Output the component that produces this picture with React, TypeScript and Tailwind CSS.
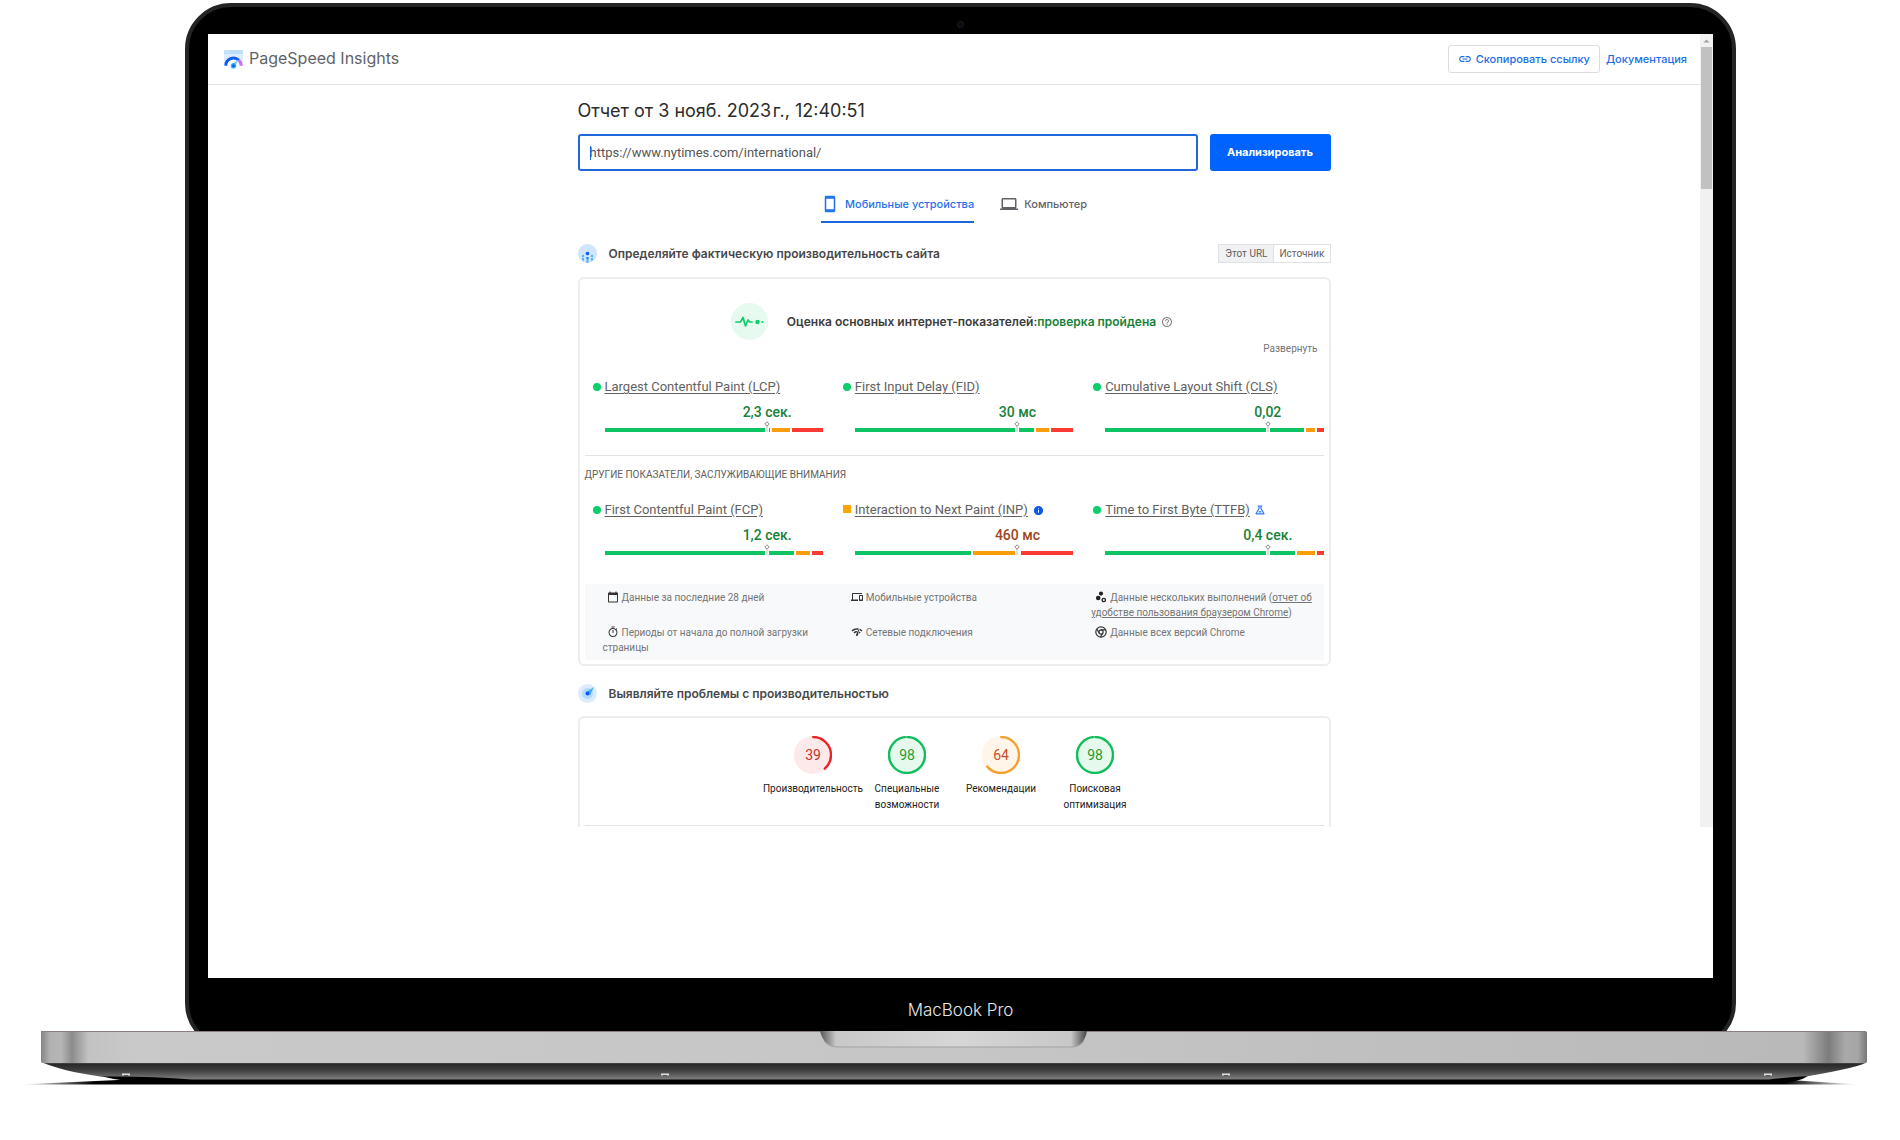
import React from "react";
import {
  MdLink,
  MdStayCurrentPortrait,
  MdLaptop,
  MdHelpOutline,
  MdCalendarToday,
  MdDevices,
  MdOutlineTimer,
  MdNetworkCheck,
  MdInfo,
} from "react-icons/md";

const GREEN = "#0cce6b";
const DISPLAY = "font-['Inter',sans-serif]";

type Metric = {
  name: string;
  value: string;
  segments: [number, number, number];
  average?: boolean;
  badge?: React.ReactNode;
};

function FlaskIcon() {
  return (
    <svg viewBox="0 0 10 10" className="size-[10px]" fill="none" stroke="#2f7bf2" strokeWidth="1.2">
      <path d="M2.600 1h4.800M4 1v2.500L1 8.800h8L6 3.500V1M3.600 6.800h2.800" strokeLinejoin="round" />
    </svg>
  );
}

const coreMetrics: Metric[] = [
  { name: "Largest Contentful Paint (LCP)", value: "2,3 сек.", segments: [165, 18, 31] },
  { name: "First Input Delay (FID)", value: "30 мс", segments: [179, 13, 22] },
  { name: "Cumulative Layout Shift (CLS)", value: "0,02", segments: [199, 9, 6] },
];

const otherMetrics: Metric[] = [
  { name: "First Contentful Paint (FCP)", value: "1,2 сек.", segments: [189, 14, 11] },
  {
    name: "Interaction to Next Paint (INP)",
    value: "460 мс",
    segments: [116, 46, 52],
    average: true,
    badge: <MdInfo className="size-[11px] text-[#0b57f0]" />,
  },
  { name: "Time to First Byte (TTFB)", value: "0,4 сек.", segments: [190, 18, 6], badge: <FlaskIcon /> },
];

function MetricItem({ m }: { m: Metric }) {
  return (
    <div className="flex">
      <span
        className={
          m.average
            ? "mt-[5px] mr-1 size-2 shrink-0 bg-[#ffa400]"
            : "mt-[6px] mr-1 size-2 shrink-0 rounded-full bg-[#0cce6b]"
        }
      />
      <div className="min-w-0 flex-1">
        <div className="flex h-5 items-center gap-[5px] whitespace-nowrap text-[13px] leading-5 text-[#616161]">
          <a href="#metric" className="underline underline-offset-2">
            {m.name}
          </a>
          {m.badge}
        </div>
        <div
          className={
            m.average
              ? "mt-[5px] ml-[49%] text-center text-sm leading-5 font-medium text-[#a0481c]"
              : "mt-[5px] ml-[49%] text-center text-sm leading-5 font-medium text-[#178239]"
          }
        >
          {m.value}
        </div>
        <div className="relative mt-[6px] flex h-1 gap-[2px]">
          <span className="bg-[#0cc463]" style={{ flexGrow: m.segments[0] }} />
          <span className="bg-[#fa9d0c]" style={{ flexGrow: m.segments[1] }} />
          <span className="bg-[#f93a35]" style={{ flexGrow: m.segments[2] }} />
          <svg viewBox="0 0 6 11" className="absolute bottom-0 left-[73%] h-[11px] w-[6px]">
            <rect x="1" y="7" width="4" height="4" fill="#fff" />
            <path d="M3 5v6" stroke="#bdbdbd" />
            <path d="M3 .8 5.200 3 3 5.200.8 3z" fill="#fff" stroke="#8a8a8a" />
          </svg>
        </div>
      </div>
    </div>
  );
}

function BubblesIcon() {
  return (
    <svg viewBox="0 0 12 12" className="size-3">
      <circle cx="6" cy="2.600" r="2.100" fill="#222" />
      <circle cx="3.200" cy="7" r="2.300" fill="#222" />
      <circle cx="8.800" cy="9" r="1.700" fill="none" stroke="#222" strokeWidth="1.300" />
    </svg>
  );
}

function ChromeIcon() {
  return (
    <svg viewBox="0 0 12 12" className="size-3" fill="none" stroke="#333" strokeWidth="1.200">
      <circle cx="6" cy="6" r="5.200" />
      <circle cx="6" cy="6" r="2.100" />
      <path d="M6 3.900h4.700M4.200 7.050 1.800 3M7.800 7.050 5.500 11.100" />
    </svg>
  );
}

function Gauge({ score, label, ring, fill, text }: { score: number; label: string; ring: string; fill: string; text: string }) {
  const r = 18;
  const c = 2 * Math.PI * r;
  return (
    <a href="#category" className="flex w-[94px] flex-col items-center">
      <svg viewBox="0 0 38 38" className="size-[38px]">
        <circle cx="19" cy="19" r="19" fill={fill} />
        <circle
          cx="19"
          cy="19"
          r={r}
          fill="none"
          stroke={ring}
          strokeWidth="2.400"
          strokeLinecap="round"
          strokeDasharray={`${(c * score) / 100 - 1} ${c}`}
          transform="rotate(-89 19 19)"
        />
        <text x="19" y="24" textAnchor="middle" fontSize="14" fontFamily="Roboto, sans-serif" fill={text}>
          {score}
        </text>
      </svg>
      <span className="mt-[7px] px-3 text-center text-[10px] leading-4 text-[#212121]">{label}</span>
    </a>
  );
}

function Header() {
  return (
    <header className={`flex h-[51px] items-center border-b border-[#e3e4e6] pr-[13px] pl-4 ${DISPLAY}`}>
      <svg viewBox="0 0 19 19" className="size-[19px]">
        <path d="M1.500 0h16a1.500 1.500 0 0 1 1.500 1.500V15H0V1.500A1.500 1.500 0 0 1 1.500 0z" fill="#dcebfd" />
        <path d="M1.500 0h16a1.500 1.500 0 0 1 1.500 1.500V4H0V1.500A1.500 1.500 0 0 1 1.500 0z" fill="#bcdcfb" />
        <path d="M1.500 2h1M4 2h1" stroke="#fff" />
        <path d="M0 16a9.500 9.500 0 0 1 19 0v1H0z" fill="#fff" />
        <path d="M1.800 15.800a7.700 7.700 0 0 1 13-5.600" fill="none" stroke="#0b5cf5" strokeWidth="3" />
        <path d="M14.800 10.200a7.700 7.700 0 0 1 2.400 5.600" fill="none" stroke="#c56cf5" strokeWidth="3" />
        <path d="m14 9.500-2.500 6.800-3.500-2z" fill="#7cc8fb" />
        <circle cx="9.500" cy="15.700" r="2.800" fill="#35b0fa" />
        <circle cx="9.500" cy="15.700" r="1.500" fill="#0b5cf5" />
      </svg>
      <span className="ml-[6px] pb-0.5 text-base leading-5 text-[#5f6368]">PageSpeed Insights</span>
      <button
        type="button"
        className="ml-auto flex h-7 items-center gap-1 rounded-[3px] border border-[#dadce0] px-[9px] text-[11px] font-medium whitespace-nowrap text-[#1a6fe8]"
      >
        <MdLink className="size-[14px]" />
        Скопировать ссылку
      </button>
      <a href="#docs" className="ml-[6px] text-[11px] font-medium text-[#1a6fe8]">
        Документация
      </a>
    </header>
  );
}

function FieldDataIcon() {
  return (
    <svg viewBox="0 0 19 19" className="size-[19px]">
      <circle cx="9.500" cy="9.500" r="9.500" fill="#cfe5fc" />
      <g fill="#4db5f7">
        <circle cx="5" cy="12" r="1.200" />
        <circle cx="14" cy="12" r="1.200" />
        <path d="M4 14h2v3l-2-1zM13 14h2v2l-2 1zM8.500 13h2v6h-2z" />
      </g>
      <circle cx="9.500" cy="9.500" r="1.800" fill="#0b5cf5" />
      <path d="M8.500 13h2v2h-2z" fill="#1f83f7" />
    </svg>
  );
}

function DiagnoseIcon() {
  return (
    <svg viewBox="0 0 19 19" className="size-[19px]">
      <circle cx="9.500" cy="9.500" r="9.500" fill="#dcecfd" />
      <circle cx="9.500" cy="9.500" r="5.500" fill="#b5dafb" />
      <path d="M16 3 12 11.500 8 8z" fill="#45b1f8" />
      <circle cx="9.500" cy="9.500" r="2" fill="#0b5cf5" />
    </svg>
  );
}

function SectionTitle({ icon, children }: { icon: React.ReactNode; children: React.ReactNode }) {
  return (
    <h2 className={`flex items-center gap-3 text-[12px] leading-[19px] font-semibold text-[#484848] ${DISPLAY}`}>
      {icon}
      {children}
    </h2>
  );
}

function InfoItem({ icon, children }: { icon: React.ReactNode; children: React.ReactNode }) {
  return (
    <li>
      <span className="mr-[3px] ml-1 inline-block align-[-2px] text-[12px] text-[#333]">{icon}</span>
      {children}
    </li>
  );
}

function Report() {
  return (
    <main className="mx-auto w-full max-w-[753px] pt-[14px]">
      <h1 className={`text-lg leading-6 text-[#2c2c2c] ${DISPLAY}`}>{"Отчет от 3 нояб. 2023\u200aг., 12:40:51"}</h1>
      <form className="mt-[11px] flex gap-3" onSubmit={(e) => e.preventDefault()}>
        <div className="relative flex-1">
          <input
            type="text"
            aria-label="URL страницы"
            defaultValue="https://www.nytimes.com/international/"
            className="h-[37px] w-full rounded-[3px] border-2 border-[#2067dd] px-[10px] text-[13px] text-[#555] outline-none"
          />
          <span className="absolute top-3 left-3 h-[14px] w-px bg-[#1a66e0]" />
        </div>
        <button
          type="submit"
          className={`h-[37px] w-[121px] rounded-[3px] bg-[#0163fe] text-[11px] font-bold text-white ${DISPLAY}`}
        >
          Анализировать
        </button>
      </form>

      <div role="tablist" className={`mt-[14px] flex justify-center gap-[26px] text-[11px] font-medium ${DISPLAY}`}>
        <button
          role="tab"
          aria-selected="true"
          className="flex h-[38px] items-center gap-[6px] border-b-2 border-[#1a66dd] pt-0.5 text-[#1f72e8]"
        >
          <MdStayCurrentPortrait className="size-[18px]" />
          Мобильные устройства
        </button>
        <button role="tab" aria-selected="false" className="flex h-[38px] items-center gap-[6px] text-[#5f6368]">
          <MdLaptop className="size-[18px]" />
          Компьютер
        </button>
      </div>

      <div className="mt-[21px] flex items-center justify-between">
        <SectionTitle icon={<FieldDataIcon />}>Определяйте фактическую производительность сайта</SectionTitle>
        <div className="flex h-[19px] border border-[#dfe1e4] text-[10px] leading-[17px] text-[#5f5f5f]">
          <button type="button" className="border-r border-[#dfe1e4] bg-[#f0f1f3] px-[6px]">
            Этот URL
          </button>
          <button type="button" className="px-[5px]">
            Источник
          </button>
        </div>
      </div>

      <section className="mt-[14px] rounded-md border-2 border-[#ededee] px-[5px] pt-6 pb-1">
        <div className="flex h-[37px] items-center justify-center">
          <svg viewBox="0 0 37 37" className="mr-[19px] size-[37px]">
            <circle cx="18.500" cy="18.500" r="18.500" fill="#e7faf0" />
            <path
              d="M5 19h4.500l2.500-4.500 2.500 8.500 2.500-6 1.500 2H21"
              fill="none"
              stroke={GREEN}
              strokeWidth="1.700"
              strokeLinejoin="round"
              strokeLinecap="round"
            />
            <circle cx="26.500" cy="19" r="2.200" fill={GREEN} />
            <circle cx="31.500" cy="19" r="1.100" fill={GREEN} />
          </svg>
          <p className={`text-[12px] leading-5 font-semibold text-[#3c3c3c] ${DISPLAY}`}>
            Оценка основных интернет-показателей:<span className="text-[#178239]">проверка пройдена</span>
          </p>
          <MdHelpOutline className="mr-1 ml-[5px] size-3 text-[#808080]" />
        </div>
        <div className="flex justify-end pt-px pr-[6px]">
          <button type="button" className="text-[10px] leading-4 text-[#757575]">
            Развернуть
          </button>
        </div>
        <div className="mt-5 grid grid-cols-3 gap-x-5 pl-2">
          {coreMetrics.map((m) => (
            <MetricItem key={m.name} m={m} />
          ))}
        </div>
        <hr className="mt-[23px] border-[#e4e4e4]" />
        <h3 className="mt-[11px] text-[10px] leading-4 text-[#616161]">ДРУГИЕ ПОКАЗАТЕЛИ, ЗАСЛУЖИВАЮЩИЕ ВНИМАНИЯ</h3>
        <div className="mt-[17px] grid grid-cols-3 gap-x-5 pl-2">
          {otherMetrics.map((m) => (
            <MetricItem key={m.name} m={m} />
          ))}
        </div>
        <ul className="mt-[29px] grid grid-cols-3 gap-x-3 gap-y-[5px] bg-[#f8f9fa] pt-[6px] pb-[5px] pl-[18px] text-[10px] leading-[15px] text-[#757575]">
          <InfoItem icon={<MdCalendarToday />}>Данные за последние 28 дней</InfoItem>
          <InfoItem icon={<MdDevices />}>Мобильные устройства</InfoItem>
          <InfoItem icon={<BubblesIcon />}>
            Данные нескольких выполнений (
            <a href="#crux" className="underline">
              отчет об удобстве пользования браузером Chrome
            </a>
            )
          </InfoItem>
          <InfoItem icon={<MdOutlineTimer />}>Периоды от начала до полной загрузки страницы</InfoItem>
          <InfoItem icon={<MdNetworkCheck />}>Сетевые подключения</InfoItem>
          <InfoItem icon={<ChromeIcon />}>Данные всех версий Chrome</InfoItem>
        </ul>
      </section>

      <div className="mt-[18px]">
        <SectionTitle icon={<DiagnoseIcon />}>Выявляйте проблемы с производительностью</SectionTitle>
      </div>
      <section className="mt-[13px] rounded-t-md border-2 border-b-0 border-[#ededee] px-[5px] pt-[18px] pb-px">
        <div className="flex justify-center">
          <Gauge score={39} label="Производительность" ring="#ee2222" fill="#fde9e9" text="#c9302c" />
          <Gauge score={98} label="Специальные возможности" ring="#12bd5c" fill="#e5faed" text="#2b9a2b" />
          <Gauge score={64} label="Рекомендации" ring="#f5a030" fill="#fff5e8" text="#c4512a" />
          <Gauge score={98} label="Поисковая оптимизация" ring="#12bd5c" fill="#e5faed" text="#2b9a2b" />
        </div>
        <hr className="mt-3 border-[#e4e4e4]" />
      </section>
    </main>
  );
}

function LaptopBase() {
  return (
    <svg viewBox="0 0 1900 60" preserveAspectRatio="none" className="block h-[60px] w-full">
      <defs>
        <linearGradient id="deck" gradientUnits="userSpaceOnUse" x1="41" x2="1867" y1="0" y2="0">
          <stop offset="0" stopColor="#858585" />
          <stop offset=".005" stopColor="#b2b2b2" />
          <stop offset=".011" stopColor="#b6b6b6" />
          <stop offset=".017" stopColor="#8c8c8c" />
          <stop offset=".026" stopColor="#c2c2c2" />
          <stop offset=".05" stopColor="#c9c9c9" />
          <stop offset=".5" stopColor="#c6c6c6" />
          <stop offset=".965" stopColor="#b9b9b9" />
          <stop offset=".979" stopColor="#7c7c7c" />
          <stop offset=".988" stopColor="#a9a9a9" />
          <stop offset=".995" stopColor="#a6a6a6" />
          <stop offset="1" stopColor="#777" />
        </linearGradient>
        <linearGradient id="under" x1="0" x2="0" y1="0" y2="1">
          <stop offset="0" stopColor="#777" />
          <stop offset=".12" stopColor="#282828" />
          <stop offset=".45" stopColor="#3c3c3c" />
          <stop offset="1" stopColor="#808080" />
        </linearGradient>
        <linearGradient id="ground" x1="0" x2="1" y1="0" y2="0">
          <stop offset="0" stopColor="#000" stopOpacity="0" />
          <stop offset=".04" stopColor="#000" />
          <stop offset=".96" stopColor="#000" />
          <stop offset="1" stopColor="#000" stopOpacity="0" />
        </linearGradient>
        <linearGradient id="notch" x1="0" x2="1" y1="0" y2="0">
          <stop offset="0" stopColor="#555" />
          <stop offset=".06" stopColor="#c8c8c8" />
          <stop offset=".5" stopColor="#d6d6d6" />
          <stop offset=".94" stopColor="#c8c8c8" />
          <stop offset="1" stopColor="#444" />
        </linearGradient>
      </defs>
      <path d="M20 53.500 118 49H1790l68 4.500z" fill="url(#ground)" />
      <path d="M100 45q24 6 60 8H1770q28-1 38-8z" fill="#000" />
      <path d="M41 31H1867q-6 5-58 14-20 1-40 3.500H192Q150 45 100 45.500 62 40 41 31z" fill="url(#under)" />
      <path d="M41 1q0-1 2-1H1864q3 0 3 2V30q0 2-3 2H43q-2 0-2-2z" fill="url(#deck)" />
      <path d="M41 .5H1866" stroke="#8a8080" />
      <path d="M820 0H1087q-3 16-16 16H838q-14 0-18-16z" fill="url(#notch)" />
      <path d="M824 10q4 6 14 6h233q9 0 13-6" fill="none" stroke="#a2a2a2" />
      <path d="M122 43.500h8M661 43.500h8M1222 43.500h8M1764 43.500h8" stroke="#ddd" strokeWidth="2" />
      <path d="M124 44.500h4M663 44.500h4M1224 44.500h4M1766 44.500h4" stroke="#555" />
    </svg>
  );
}

export default function App() {
  return (
    <div className="min-h-screen bg-white pt-[3px] font-['Roboto',sans-serif]">
      <div className="mr-[164px] ml-[185px] overflow-hidden">
        <div className="-mb-[18px] flex flex-col rounded-[46px] border-4 border-[#232425] bg-black px-[19px] pb-[14px]">
          <div className="flex h-[27px] items-center justify-center pt-[7px]">
            <span className="size-[7px] rounded-full border border-[#1c1c28] bg-[#0a0a12]" />
          </div>
          <div className="bg-white pb-[151px]">
            <div className="flex">
              <div className="min-w-0 flex-1">
                <Header />
                <Report />
              </div>
              <div className="flex w-[13px] flex-col items-center bg-[#f1f1f1]">
                <svg viewBox="0 0 13 13" className="size-[13px]">
                  <path d="M3.500 8.500h6l-3-3z" fill="#a0a0a0" />
                </svg>
                <div className="h-[142px] w-[11px] bg-[#c1c1c1]" />
              </div>
            </div>
          </div>
          <div className="flex h-[53px] items-center justify-center pt-[11px] text-[17px] leading-6 font-light text-[#e6e6e6] font-['Inter',sans-serif]">
            MacBook Pro
          </div>
        </div>
      </div>
      <LaptopBase />
    </div>
  );
}
